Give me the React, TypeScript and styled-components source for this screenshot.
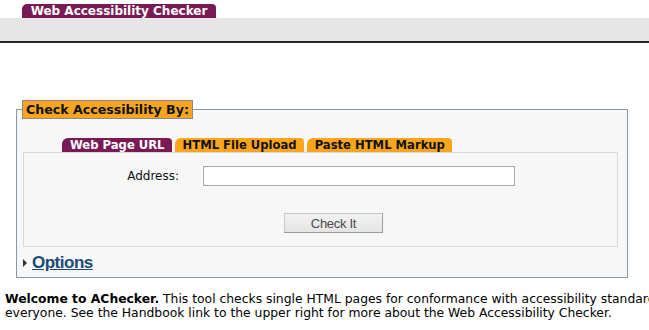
import * as React from 'react';
import styled, { createGlobalStyle } from 'styled-components';

const GlobalStyle = createGlobalStyle`
  html, body {
    margin: 0;
    padding: 0;
    background: #ffffff;
    overflow: hidden;
  }
  body {
    font-family: "DejaVu Sans", Verdana, sans-serif;
    color: #000000;
  }
`

const SHeader = styled.div`
  padding-top: 4px;
`

const STitleTab = styled.div`
  margin-left: 22px;
  width: 194px;
  height: 14px;
  background: #7a1a55;
  color: #ffffff;
  font-weight: bold;
  font-size: 12px;
  line-height: 15px;
  text-align: center;
  border-radius: 5px 4px 0 0;
`

const SBand = styled.div`
  height: 23px;
  background: #e6e6e6;
  border-bottom: 2px solid #262626;
`

const SMain = styled.div`
  padding: 57px 0 0 16px;
`

const SFieldset = styled.fieldset`
  margin: 0;
  width: 595px;
  padding: 0 9px 4px 6px;
  border: 1px solid #8a98a6;
  background: #f7f7f7;
  min-inline-size: 0;
`

const SLegend = styled.legend`
  margin-left: -1px;
  padding: 0 3px;
  height: 17px;
  line-height: 18px;
  background: #f9a51d;
  border: 1px solid #8a8a8a;
  font-weight: bold;
  font-size: 12.6px;
  color: #111111;
`

const STabs = styled.div`
  display: flex;
  gap: 3px;
  padding: 19px 0 0 39px;
`

interface ITabStyle {
  active: boolean
}

const STab = styled.div<ITabStyle>`
  height: 14px;
  padding: 0 7px 0 8px;
  background: ${({ active }) => (active ? '#7a1a55' : '#fba51b')};
  color: ${({ active }) => (active ? '#ffffff' : '#111111')};
  font-weight: bold;
  font-size: 11.6px;
  line-height: 15px;
  border-radius: 6px 4px 0 0;
  white-space: nowrap;
`

const SPanel = styled.div`
  height: 93px;
  border: 1px solid #d8d8d8;
  background: #f7f7f7;
  display: flex;
  flex-direction: column;
`

const SAddressRow = styled.div`
  display: flex;
  align-items: center;
  padding-top: 13px;
`

const SLabel = styled.label`
  width: 155px;
  text-align: right;
  font-size: 12px;
  color: #111111;
`

const SInput = styled.input`
  box-sizing: border-box;
  margin-left: 24px;
  width: 312px;
  height: 20px;
  border: 1px solid #a9a9a9;
  background: #ffffff;
`

const SButtonRow = styled.div`
  display: flex;
  justify-content: center;
  padding: 27px 0 0 26px;
`

const SButton = styled.button`
  box-sizing: border-box;
  width: 99px;
  height: 20px;
  padding: 0;
  border: 1px solid #9a9a9a;
  border-top-color: #c8c8c8;
  border-left-color: #c8c8c8;
  background: linear-gradient(#f2f2f2, #e4e4e4);
  font-family: "Liberation Sans Narrow", "Liberation Sans", Arial, sans-serif;
  font-size: 13px;
  letter-spacing: -0.3px;
  color: #4a4a4a;
`

const SOptions = styled.div`
  display: flex;
  align-items: center;
  gap: 5px;
  padding: 6px 0 0 0;
`

const STriangle = styled.span`
  width: 0;
  height: 0;
  border-top: 4px solid transparent;
  border-bottom: 4px solid transparent;
  border-left: 4px solid #333333;
`

const SOptionsLink = styled.a`
  font-family: "Liberation Sans Narrow", "Liberation Sans", Arial, sans-serif;
  font-weight: bold;
  font-size: 17px;
  letter-spacing: -0.5px;
  color: #1a4a78;
  text-decoration: underline;
`

const SWelcome = styled.p`
  margin: 14px 0 0 5px;
  font-size: 12.35px;
  line-height: 14px;
  white-space: nowrap;
`

const tabs = ['Web Page URL', 'HTML File Upload', 'Paste HTML Markup']

const App = () => {
  return (
    <>
      <GlobalStyle />
      <SHeader>
        <STitleTab>Web Accessibility Checker</STitleTab>
        <SBand />
      </SHeader>
      <SMain>
        <SFieldset>
          <SLegend>Check Accessibility By:</SLegend>
          <STabs>
            {tabs.map((t, i) => (
              <STab key={t} active={i === 0}>{t}</STab>
            ))}
          </STabs>
          <SPanel>
            <SAddressRow>
              <SLabel htmlFor="uri">Address:</SLabel>
              <SInput id="uri" type="text" />
            </SAddressRow>
            <SButtonRow>
              <SButton>Check It</SButton>
            </SButtonRow>
          </SPanel>
          <SOptions>
            <STriangle />
            <SOptionsLink href="#">Options</SOptionsLink>
          </SOptions>
        </SFieldset>
      </SMain>
      <SWelcome>
        <b>Welcome to AChecker.</b> This tool checks single HTML pages for conformance with accessibility standards
        <br />
        everyone. See the Handbook link to the upper right for more about the Web Accessibility Checker.
      </SWelcome>
    </>
  )
}

export default App
